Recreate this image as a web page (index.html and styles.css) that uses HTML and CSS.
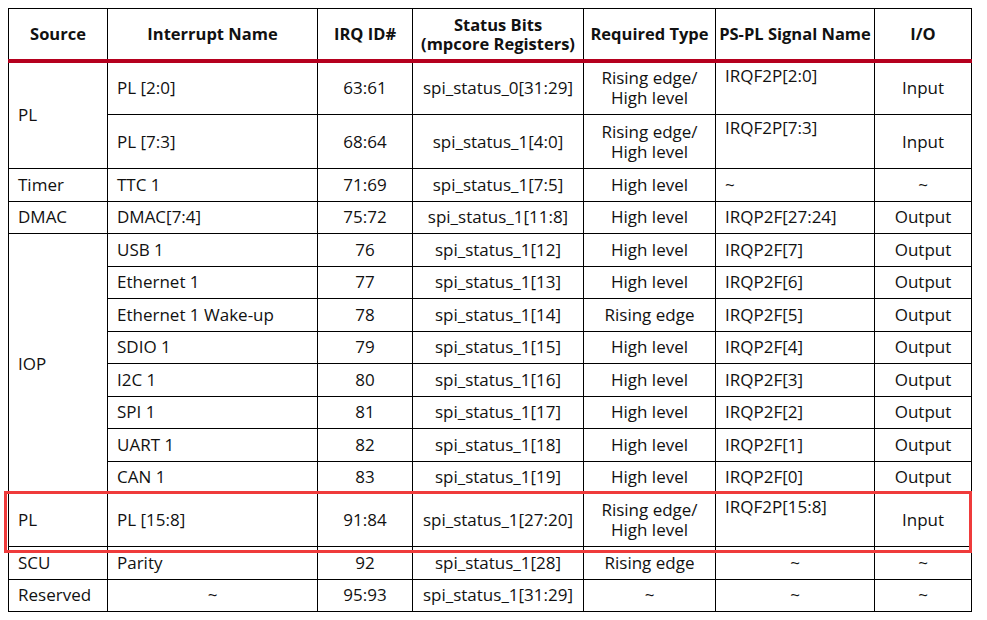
FILE: index.html
```html
<!DOCTYPE html>
<html>
<head>
<meta charset="utf-8">
<link rel="stylesheet" href="styles.css">
</head>
<body>
<div class="wrap">
<table class="irq">
<colgroup>
<col class="c1"><col class="c2"><col class="c3"><col class="c4"><col class="c5"><col class="c6"><col class="c7">
</colgroup>
<thead>
<tr>
<th>Source</th><th>Interrupt Name</th><th>IRQ ID#</th><th>Status Bits<br>(mpcore Registers)</th><th>Required Type</th><th>PS-PL Signal Name</th><th>I/O</th>
</tr>
</thead>
<tbody>
<tr class="tall">
<td rowspan="2" class="l">PL</td><td class="l">PL [2:0]</td><td>63:61</td><td>spi_status_0[31:29]</td><td>Rising edge/<br>High level</td><td class="l top">IRQF2P[2:0]</td><td>Input</td>
</tr>
<tr class="tall">
<td class="l">PL [7:3]</td><td>68:64</td><td>spi_status_1[4:0]</td><td>Rising edge/<br>High level</td><td class="l top">IRQF2P[7:3]</td><td>Input</td>
</tr>
<tr><td class="l">Timer</td><td class="l">TTC 1</td><td>71:69</td><td>spi_status_1[7:5]</td><td>High level</td><td class="l">~</td><td>~</td></tr>
<tr><td class="l">DMAC</td><td class="l">DMAC[7:4]</td><td>75:72</td><td>spi_status_1[11:8]</td><td>High level</td><td class="l">IRQP2F[27:24]</td><td>Output</td></tr>
<tr><td rowspan="8" class="l">IOP</td><td class="l">USB 1</td><td>76</td><td>spi_status_1[12]</td><td>High level</td><td class="l">IRQP2F[7]</td><td>Output</td></tr>
<tr><td class="l">Ethernet 1</td><td>77</td><td>spi_status_1[13]</td><td>High level</td><td class="l">IRQP2F[6]</td><td>Output</td></tr>
<tr><td class="l">Ethernet 1 Wake-up</td><td>78</td><td>spi_status_1[14]</td><td>Rising edge</td><td class="l">IRQP2F[5]</td><td>Output</td></tr>
<tr><td class="l">SDIO 1</td><td>79</td><td>spi_status_1[15]</td><td>High level</td><td class="l">IRQP2F[4]</td><td>Output</td></tr>
<tr><td class="l">I2C 1</td><td>80</td><td>spi_status_1[16]</td><td>High level</td><td class="l">IRQP2F[3]</td><td>Output</td></tr>
<tr><td class="l">SPI 1</td><td>81</td><td>spi_status_1[17]</td><td>High level</td><td class="l">IRQP2F[2]</td><td>Output</td></tr>
<tr><td class="l">UART 1</td><td>82</td><td>spi_status_1[18]</td><td>High level</td><td class="l">IRQP2F[1]</td><td>Output</td></tr>
<tr><td class="l">CAN 1</td><td>83</td><td>spi_status_1[19]</td><td>High level</td><td class="l">IRQP2F[0]</td><td>Output</td></tr>
<tr class="tall last">
<td class="l">PL</td><td class="l">PL [15:8]</td><td>91:84</td><td>spi_status_1[27:20]</td><td>Rising edge/<br>High level</td><td class="l top">IRQF2P[15:8]</td><td>Input</td>
</tr>
<tr><td class="l">SCU</td><td class="l">Parity</td><td>92</td><td>spi_status_1[28]</td><td>Rising edge</td><td>~</td><td>~</td></tr>
<tr><td class="l">Reserved</td><td>~</td><td>95:93</td><td>spi_status_1[31:29]</td><td>~</td><td>~</td><td>~</td></tr>
</tbody>
</table>
<div class="highlight"></div>
</div>
</body>
</html>
```

FILE: styles.css
```css
html, body {
  margin: 0;
  padding: 0;
  background: #ffffff;
}
body {
  padding: 8px;
  font-family: "Open Sans", "Noto Sans", sans-serif;
  font-size: 17px;
  color: #111;
}
.wrap {
  position: relative;
  width: 963px;
}
.irq {
  border-collapse: collapse;
  table-layout: fixed;
  width: 963px;
}
.c1 { width: 99px; }
.c2 { width: 210px; }
.c3 { width: 95px; }
.c4 { width: 171px; }
.c5 { width: 132px; }
.c6 { width: 159px; }
.c7 { width: 97px; }
.irq th, .irq td {
  box-sizing: border-box;
  border: 1px solid #000;
  padding: 0 9px;
  text-align: center;
  vertical-align: middle;
  line-height: 20px;
  white-space: nowrap;
  overflow: hidden;
}
.irq th {
  height: 52px;
  font-size: 16.5px;
  line-height: 19px;
  font-weight: 700;
  border-bottom: 4px solid #b5001e;
  padding: 0 2px;
}
.irq td {
  height: 32.5px;
  font-weight: 400;
}
.irq tr.tall td {
  height: 54px;
}
.irq tr.tall.last td {
  height: 53px;
}
.irq td.l {
  text-align: left;
}
.irq td.top {
  vertical-align: top;
  padding-top: 3px;
}
.highlight {
  position: absolute;
  left: -4px;
  top: 483px;
  width: 962px;
  height: 56px;
  border: 3px solid #ef3b3b;
  pointer-events: none;
}
```
